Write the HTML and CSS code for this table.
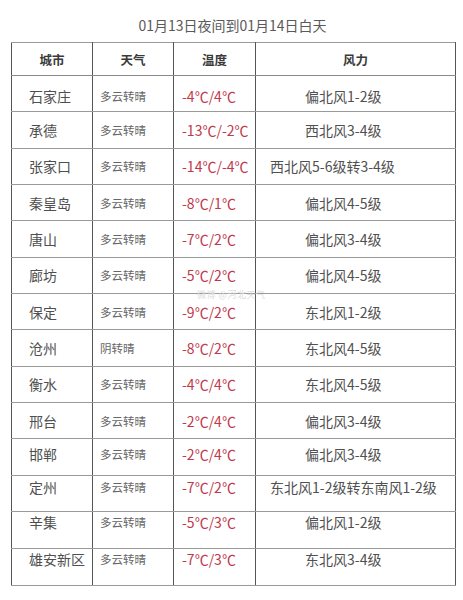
FILE: index.html
```html
<!DOCTYPE html>
<html lang="zh">
<head>
<meta charset="utf-8">
<title>01月13日夜间到01月14日白天</title>
<link rel="stylesheet" href="styles.css">
</head>
<body>
<div class="page">
  <h1 class="title">01月13日夜间到01月14日白天</h1>
  <div class="table-wrap">
    <table class="weather">
      <colgroup>
        <col class="c-city"><col class="c-wx"><col class="c-temp"><col class="c-wind">
      </colgroup>
      <thead>
        <tr><th>城市</th><th>天气</th><th>温度</th><th>风力</th></tr>
      </thead>
      <tbody>
        <tr><td class="city">石家庄</td><td class="wx">多云转晴</td><td class="temp">-4℃/4℃</td><td class="wind">偏北风1-2级</td></tr>
        <tr><td class="city">承德</td><td class="wx">多云转晴</td><td class="temp">-13℃/-2℃</td><td class="wind">西北风3-4级</td></tr>
        <tr><td class="city">张家口</td><td class="wx">多云转晴</td><td class="temp">-14℃/-4℃</td><td class="wind long">西北风5-6级转3-4级</td></tr>
        <tr><td class="city">秦皇岛</td><td class="wx">多云转晴</td><td class="temp">-8℃/1℃</td><td class="wind">偏北风4-5级</td></tr>
        <tr><td class="city">唐山</td><td class="wx">多云转晴</td><td class="temp">-7℃/2℃</td><td class="wind">偏北风3-4级</td></tr>
        <tr><td class="city">廊坊</td><td class="wx">多云转晴</td><td class="temp">-5℃/2℃</td><td class="wind">偏北风4-5级</td></tr>
        <tr><td class="city">保定</td><td class="wx">多云转晴</td><td class="temp">-9℃/2℃</td><td class="wind">东北风1-2级</td></tr>
        <tr><td class="city">沧州</td><td class="wx">阴转晴</td><td class="temp">-8℃/2℃</td><td class="wind">东北风4-5级</td></tr>
        <tr><td class="city">衡水</td><td class="wx">多云转晴</td><td class="temp">-4℃/4℃</td><td class="wind">东北风4-5级</td></tr>
        <tr><td class="city">邢台</td><td class="wx">多云转晴</td><td class="temp">-2℃/4℃</td><td class="wind">偏北风3-4级</td></tr>
        <tr class="up-1"><td class="city">邯郸</td><td class="wx">多云转晴</td><td class="temp">-2℃/4℃</td><td class="wind">偏北风3-4级</td></tr>
        <tr class="up-2"><td class="city">定州</td><td class="wx">多云转晴</td><td class="temp">-7℃/2℃</td><td class="wind long">东北风1-2级转东南风1-2级</td></tr>
        <tr class="up-3"><td class="city">辛集</td><td class="wx">多云转晴</td><td class="temp">-5℃/3℃</td><td class="wind">偏北风1-2级</td></tr>
        <tr class="up-3"><td class="city">雄安新区</td><td class="wx">多云转晴</td><td class="temp">-7℃/3℃</td><td class="wind">东北风3-4级</td></tr>
      </tbody>
    </table>
    <span class="watermark">微博 @河北天气</span>
  </div>
</div>
</body>
</html>
```

FILE: styles.css
```css
html, body {
  margin: 0;
  padding: 0;
  background: #ffffff;
}

body {
  font-family: "Noto Sans CJK SC", "Noto Sans", sans-serif;
  color: #555555;
}

.page {
  width: 463px;
  padding-top: 15px;
}

.title {
  margin: 0;
  height: 27px;
  font-size: 14px;
  font-weight: 400;
  line-height: 20px;
  text-align: center;
  color: #5a5a5a;
  padding-left: 2px;
}

.table-wrap {
  position: relative;
  margin-left: 11px;
  width: 444px;
}

.weather {
  border-collapse: collapse;
  table-layout: fixed;
  width: 444px;
  border: 1px solid #8a8a8a;
}

.c-city { width: 81px; }
.c-wx { width: 81px; }
.c-temp { width: 82px; }
.c-wind { width: 200px; }

.weather th,
.weather td {
  padding: 0;
  border-left: 1px solid #555555;
  border-right: 1px solid #555555;
  border-top: 1px solid #9a9a9a;
  border-bottom: 1px solid #9a9a9a;
  vertical-align: middle;
  white-space: nowrap;
}

.weather thead tr {
  height: 33px;
}

.weather th {
  font-size: 12.5px;
  font-weight: 700;
  color: #3a3a3a;
  text-align: center;
  border-bottom-color: #8a8a8a;
}

.weather tbody tr {
  height: 36.35px;
}

.weather tbody tr:first-child td {
  padding-top: 5px;
}

.weather tbody tr.up-1 td {
  padding-bottom: 7px;
}

.weather tbody tr.up-2 td {
  padding-bottom: 12px;
}

.weather tbody tr.up-3 td {
  padding-bottom: 16px;
}

.city {
  font-size: 14px;
  padding-left: 17px !important;
  color: #4f4f4f;
}

.wx {
  font-size: 11.5px;
  padding-left: 7px !important;
  color: #666666;
}

.temp {
  font-size: 14px;
  padding-left: 8px !important;
  color: #c0394b;
}

.wind {
  font-size: 14px;
  padding-left: 49px !important;
  color: #505050;
}

.wind.long {
  padding-left: 14px !important;
}

.watermark {
  position: absolute;
  left: 186px;
  top: 246px;
  font-size: 9px;
  color: #dcdcdc;
  letter-spacing: 0.5px;
}
```
